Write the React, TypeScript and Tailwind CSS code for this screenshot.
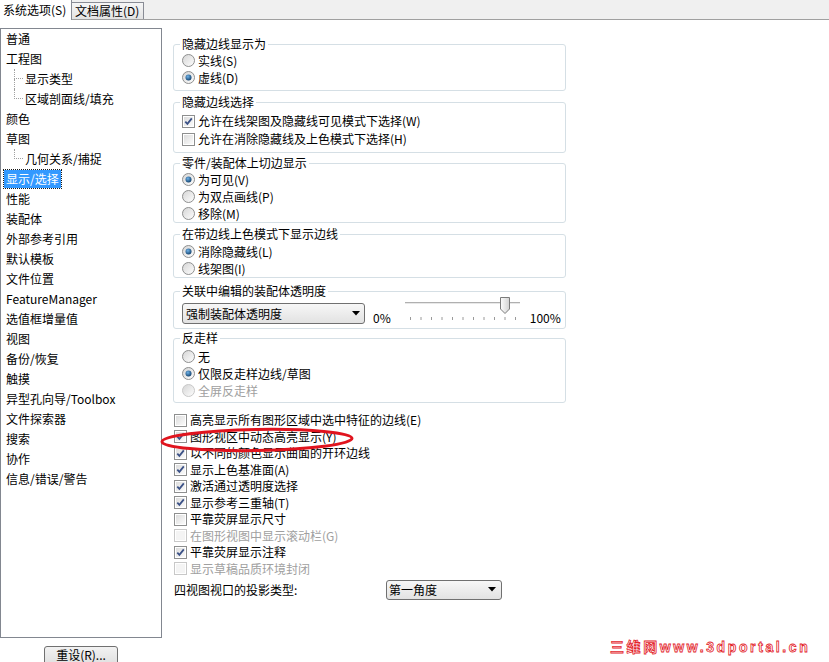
import React from "react";

type TreeItem = { t: string; child?: boolean; last?: boolean; sel?: boolean };

const tree: TreeItem[] = [
  { t: "普通" },
  { t: "工程图" },
  { t: "显示类型", child: true },
  { t: "区域剖面线/填充", child: true, last: true },
  { t: "颜色" },
  { t: "草图" },
  { t: "几何关系/捕捉", child: true, last: true },
  { t: "显示/选择", sel: true },
  { t: "性能" },
  { t: "装配体" },
  { t: "外部参考引用" },
  { t: "默认模板" },
  { t: "文件位置" },
  { t: "FeatureManager" },
  { t: "选值框增量值" },
  { t: "视图" },
  { t: "备份/恢复" },
  { t: "触摸" },
  { t: "异型孔向导/Toolbox" },
  { t: "文件探索器" },
  { t: "搜索" },
  { t: "协作" },
  { t: "信息/错误/警告" },
];

const looseChecks = [
  { t: "高亮显示所有图形区域中选中特征的边线(E)", on: false },
  { t: "图形视区中动态高亮显示(Y)", on: true },
  { t: "以不同的颜色显示曲面的开环边线", on: true },
  { t: "显示上色基准面(A)", on: true },
  { t: "激活通过透明度选择", on: true },
  { t: "显示参考三重轴(T)", on: true },
  { t: "平靠荧屏显示尺寸", on: false },
  { t: "在图形视图中显示滚动栏(G)", on: false, off: true },
  { t: "平靠荧屏显示注释", on: true },
  { t: "显示草稿品质环境封闭", on: false, off: true },
];

function Radio({ on, off }: { on?: boolean; off?: boolean }) {
  return (
    <svg width="13" height="13" viewBox="0 0 13 13" className="shrink-0">
      <defs>
        <linearGradient id="rbg" x1="0" y1="0" x2="1" y2="1">
          <stop offset="0" stopColor="#d4d4d4" />
          <stop offset="1" stopColor="#ffffff" />
        </linearGradient>
        <radialGradient id="rdot" cx="0.4" cy="0.35" r="0.7">
          <stop offset="0" stopColor="#6fb2e8" />
          <stop offset="1" stopColor="#0f3d68" />
        </radialGradient>
      </defs>
      <circle cx="6.5" cy="6.5" r="6" fill="url(#rbg)" stroke={off ? "#c8c8c8" : "#8e8f8f"} />
      {on && <circle cx="6.5" cy="6.5" r="3" fill="url(#rdot)" />}
    </svg>
  );
}

function Check({ on, off }: { on?: boolean; off?: boolean }) {
  return (
    <svg width="13" height="13" viewBox="0 0 13 13" className="shrink-0">
      <defs>
        <linearGradient id="cbg" x1="0" y1="0" x2="1" y2="1">
          <stop offset="0" stopColor="#dcdcdc" />
          <stop offset="1" stopColor="#fbfbfb" />
        </linearGradient>
      </defs>
      <rect x="0.5" y="0.5" width="12" height="12" fill="#fff" stroke={off ? "#c8c8c8" : "#8e8f8f"} />
      <rect x="2" y="2" width="9" height="9" fill={off ? "#f4f4f4" : "url(#cbg)"} />
      {on && (
        <path d="M3.3 6.6 L5.4 8.8 L9.8 3.4" fill="none" stroke="#3c5287" strokeWidth="1.8" />
      )}
    </svg>
  );
}

function Arrow() {
  return (
    <svg width="8" height="5" viewBox="0 0 8 5" className="shrink-0">
      <path d="M0 0 H8 L4 4.5 Z" fill="#000" />
    </svg>
  );
}

function Group({
  title,
  className,
  children,
}: {
  title: string;
  className: string;
  children: React.ReactNode;
}) {
  return (
    <fieldset className={`min-w-0 border border-[#d5dfe5] rounded-[3px] px-[8px] ${className}`}>
      <legend className="px-[2px] -ml-[2px] leading-[16px]">{title}</legend>
      {children}
    </fieldset>
  );
}

function Row({
  h,
  children,
  gray,
}: {
  h: string;
  children: React.ReactNode;
  gray?: boolean;
}) {
  return (
    <div className={`flex items-center gap-[3px] whitespace-nowrap ${h} ${gray ? "text-[#a0a0a0]" : ""}`}>
      {children}
    </div>
  );
}

export default function App() {
  return (
    <div className="relative w-[829px] h-[662px] overflow-hidden bg-white text-[12px] text-black font-['Noto_Sans_CJK_SC',sans-serif]">
      {/* tabs */}
      <div className="flex items-end h-[20px] bg-[#f0f0f0] border-b border-[#a0a0a0] whitespace-nowrap">
        <div className="h-[20px] w-[72px] bg-white border-r border-[#898c95] pl-[3px] leading-[19px] -mb-px">
          系统选项(S)
        </div>
        <div className="h-[17px] w-[72px] border border-l-0 border-b-0 border-[#898c95] bg-gradient-to-b from-[#f6f6f6] to-[#e3e3e3] pl-[3px] leading-[16px]">
          文档属性(D)
        </div>
      </div>

      <div className="flex pt-[8px]">
        {/* left tree */}
        <div className="flex flex-col">
          <div className="w-[162px] h-[610px] border border-[#828790] whitespace-nowrap">
            {tree.map((it) => (
              <div key={it.t} className="flex items-center h-[20px]">
                {it.child && (
                  <div className="w-[9px] h-[20px] ml-[13px] mr-[2px] flex flex-col">
                    <div className="h-[10px] border-l border-b border-dotted border-[#a0a0a0]" />
                    {!it.last && <div className="h-[10px] border-l border-dotted border-[#a0a0a0]" />}
                  </div>
                )}
                {it.sel ? (
                  <span className="ml-[3px] px-[2px] h-[18px] leading-[18px] bg-[#3399ff] text-white outline outline-1 outline-dotted outline-[#1a1a1a]">
                    {it.t}
                  </span>
                ) : (
                  <span className={it.child ? "" : "ml-[5px]"}>{it.t}</span>
                )}
              </div>
            ))}
          </div>
          <div className="ml-[44px] mt-[8px] w-[74px] h-[22px] border border-[#707070] rounded-[3px] bg-gradient-to-b from-[#f2f2f2] to-[#dddddd] text-center leading-[14px] pt-[1px]">
            重设(R)...
          </div>
        </div>

        {/* right options */}
        <div className="ml-[11px] mt-[8px] w-[393px] flex flex-col">
          <Group title="隐藏边线显示为" className="pb-[4px]">
            <Row h="h-[17px]">
              <Radio />
              <span>实线(S)</span>
            </Row>
            <Row h="h-[17px]">
              <Radio on />
              <span>虚线(D)</span>
            </Row>
          </Group>

          <Group title="隐藏边线选择" className="mt-[3px] pt-[2px] pb-[4px]">
            <Row h="h-[18px]">
              <Check on />
              <span>允许在线架图及隐藏线可见模式下选择(W)</span>
            </Row>
            <Row h="h-[18px]">
              <Check />
              <span>允许在消除隐藏线及上色模式下选择(H)</span>
            </Row>
          </Group>

          <Group title="零件/装配体上切边显示" className="mt-[2px]">
            <Row h="h-[17px]">
              <Radio on />
              <span>为可见(V)</span>
            </Row>
            <Row h="h-[17px]">
              <Radio />
              <span>为双点画线(P)</span>
            </Row>
            <Row h="h-[17px]">
              <Radio />
              <span>移除(M)</span>
            </Row>
          </Group>

          <Group title="在带边线上色模式下显示边线" className="mt-[3px] pt-[1px]">
            <Row h="h-[17px]">
              <Radio on />
              <span>消除隐藏线(L)</span>
            </Row>
            <Row h="h-[17px]">
              <Radio />
              <span>线架图(I)</span>
            </Row>
          </Group>

          <Group title="关联中编辑的装配体透明度" className="mt-[5px] pt-[4px] pb-[4px]">
            <div className="flex items-start h-[21px] whitespace-nowrap">
              <div className="flex items-center justify-between w-[183px] shrink-0 h-[21px] pl-[3px] pr-[4px] border border-[#707070] rounded-[3px] bg-gradient-to-b from-[#f7f7f7] to-[#e2e2e2]">
                <span>强制装配体透明度</span>
                <Arrow />
              </div>
              <span className="ml-[8px] mt-[7px] leading-[16px]">0%</span>
              <svg width="120" height="30" viewBox="0 0 120 30" className="ml-[12px] -mt-[8px] shrink-0">
                <defs>
                  <linearGradient id="thumb" x1="0" y1="0" x2="1" y2="0">
                    <stop offset="0" stopColor="#fdfdfd" />
                    <stop offset="1" stopColor="#d2d2d2" />
                  </linearGradient>
                </defs>
                <line x1="2" y1="7.5" x2="117" y2="7.5" stroke="#b0b0b0" />
                <line x1="2" y1="8.5" x2="117" y2="8.5" stroke="#e8e8e8" />
                {Array.from({ length: 11 }).map((_, i) => (
                  <line key={i} x1={7.5 + i * 10.5} y1="22" x2={7.5 + i * 10.5} y2="25" stroke="#9a9a9a" />
                ))}
                <path d="M97.5 2.5 H106.5 V14 L102 18.5 L97.5 14 Z" fill="url(#thumb)" stroke="#7b7b7b" />
              </svg>
              <span className="ml-[7px] mt-[7px] leading-[16px]">100%</span>
            </div>
          </Group>

          <Group title="反走样" className="mt-[1px] pt-[2px] pb-[3px]">
            <Row h="h-[17px]">
              <Radio />
              <span>无</span>
            </Row>
            <Row h="h-[17px]">
              <Radio on />
              <span>仅限反走样边线/草图</span>
            </Row>
            <Row h="h-[17px]" gray>
              <Radio off />
              <span>全屏反走样</span>
            </Row>
          </Group>

          <div className="mt-[9px] pl-[1px]">
            {looseChecks.map((c) => (
              <Row key={c.t} h="h-[16.5px]" gray={c.off}>
                <Check on={c.on} off={c.off} />
                <span>{c.t}</span>
              </Row>
            ))}
            <div className="flex items-center mt-[2px] h-[21px] whitespace-nowrap">
              <span className="w-[212px]">四视图视口的投影类型:</span>
              <div className="flex items-center justify-between w-[116px] h-[20px] pl-[2px] pr-[5px] border border-[#707070] rounded-[3px] bg-gradient-to-b from-[#f7f7f7] to-[#e2e2e2]">
                <span>第一角度</span>
                <Arrow />
              </div>
            </div>
          </div>
        </div>
      </div>

      {/* hand-drawn highlight */}
      <svg width="200" height="30" viewBox="0 0 200 30" className="absolute left-[159px] top-[425px]">
        <ellipse cx="98" cy="15" rx="95" ry="10.5" fill="none" stroke="#e0141e" strokeWidth="3" transform="rotate(-1 98 15)" />
      </svg>

      {/* watermark */}
      <div className="absolute left-[610px] top-[638px] text-[14px] font-bold tracking-[2.6px] leading-[18px] text-white [-webkit-text-stroke:0.8px_#e3242b] font-['Liberation_Sans','Noto_Sans_CJK_SC',sans-serif]">
        三维网www.3dportal.cn
      </div>
    </div>
  );
}
